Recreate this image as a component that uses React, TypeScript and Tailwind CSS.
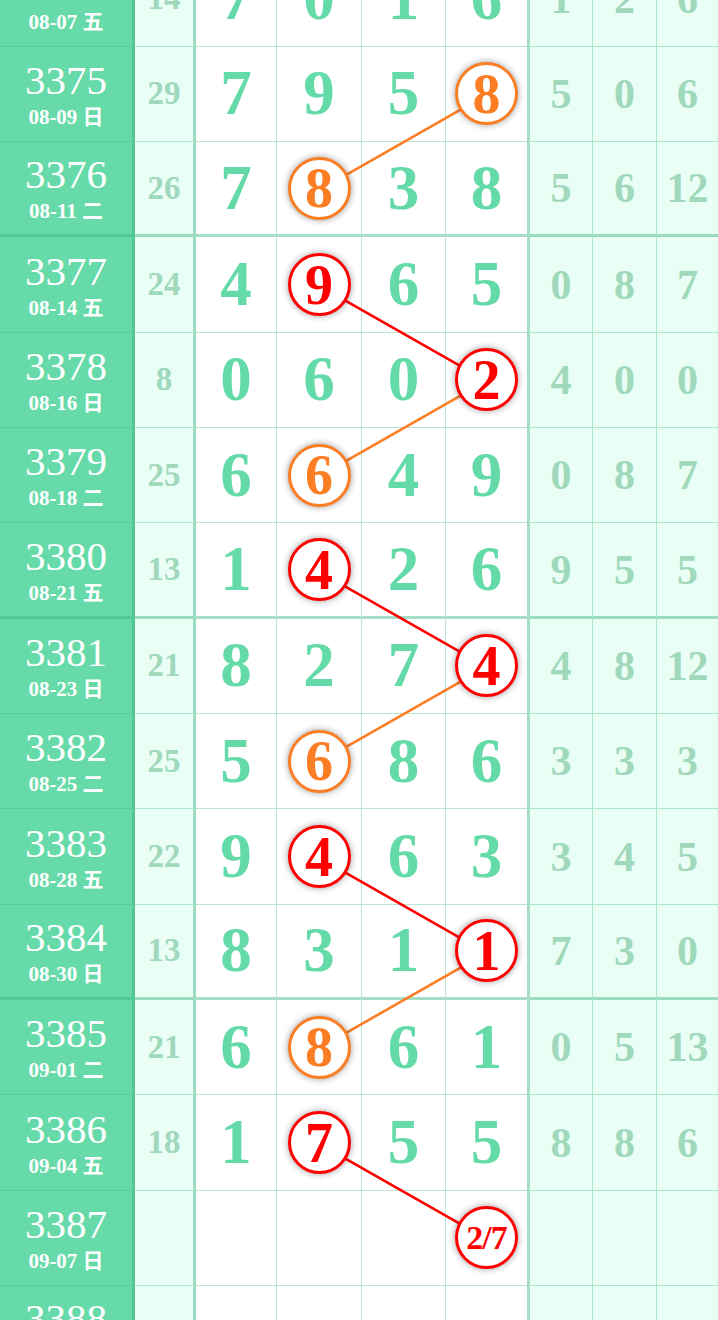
import React from 'react';

type Tone = 'red' | 'orange';
type Row = {
    period: number;
    date: string;
    sum: string;
    nums: string[];
    tail: string[];
    mark?: { col: number; tone: Tone };
};

const rows: Row[] = [
    { period: 3374, date: '08-07 五', sum: '14', nums: ['7', '0', '1', '6'], tail: ['1', '2', '6'] },
    { period: 3375, date: '08-09 日', sum: '29', nums: ['7', '9', '5', '8'], tail: ['5', '0', '6'], mark: { col: 3, tone: 'orange' } },
    { period: 3376, date: '08-11 二', sum: '26', nums: ['7', '8', '3', '8'], tail: ['5', '6', '12'], mark: { col: 1, tone: 'orange' } },
    { period: 3377, date: '08-14 五', sum: '24', nums: ['4', '9', '6', '5'], tail: ['0', '8', '7'], mark: { col: 1, tone: 'red' } },
    { period: 3378, date: '08-16 日', sum: '8', nums: ['0', '6', '0', '2'], tail: ['4', '0', '0'], mark: { col: 3, tone: 'red' } },
    { period: 3379, date: '08-18 二', sum: '25', nums: ['6', '6', '4', '9'], tail: ['0', '8', '7'], mark: { col: 1, tone: 'orange' } },
    { period: 3380, date: '08-21 五', sum: '13', nums: ['1', '4', '2', '6'], tail: ['9', '5', '5'], mark: { col: 1, tone: 'red' } },
    { period: 3381, date: '08-23 日', sum: '21', nums: ['8', '2', '7', '4'], tail: ['4', '8', '12'], mark: { col: 3, tone: 'red' } },
    { period: 3382, date: '08-25 二', sum: '25', nums: ['5', '6', '8', '6'], tail: ['3', '3', '3'], mark: { col: 1, tone: 'orange' } },
    { period: 3383, date: '08-28 五', sum: '22', nums: ['9', '4', '6', '3'], tail: ['3', '4', '5'], mark: { col: 1, tone: 'red' } },
    { period: 3384, date: '08-30 日', sum: '13', nums: ['8', '3', '1', '1'], tail: ['7', '3', '0'], mark: { col: 3, tone: 'red' } },
    { period: 3385, date: '09-01 二', sum: '21', nums: ['6', '8', '6', '1'], tail: ['0', '5', '13'], mark: { col: 1, tone: 'orange' } },
    { period: 3386, date: '09-04 五', sum: '18', nums: ['1', '7', '5', '5'], tail: ['8', '8', '6'], mark: { col: 1, tone: 'red' } },
    { period: 3387, date: '09-07 日', sum: '', nums: ['', '', '', '2/7'], tail: ['', '', ''], mark: { col: 3, tone: 'red' } },
    { period: 3388, date: '09-09 二', sum: '', nums: ['', '', '', ''], tail: ['', '', ''] },
];

// [rowA, colA, rowB, colB, tone]
const links: [number, number, number, number, Tone][] = [
    [1, 3, 2, 1, 'orange'],
    [3, 1, 4, 3, 'red'],
    [4, 3, 5, 1, 'orange'],
    [6, 1, 7, 3, 'red'],
    [7, 3, 8, 1, 'orange'],
    [9, 1, 10, 3, 'red'],
    [10, 3, 11, 1, 'orange'],
    [12, 1, 13, 3, 'red'],
];

const ROW_H = 95.33;
const colCenters = [236, 319, 403.5, 486.5];
const toneColor: Record<Tone, string> = { red: '#ff0000', orange: '#fb7d24' };

const Ball: React.FC<{ value: string; tone: Tone }> = ({ value, tone }) => (
    <div
        className={`relative z-20 flex h-[63px] w-[63px] items-center justify-center rounded-full border-[3px] bg-white shadow-[0_0_7px_rgba(0,0,0,0.4)] ${
            tone === 'red' ? 'border-[#ff0000] text-[#ff0000]' : 'border-[#fb7d24] text-[#fb7d24]'
        }`}
    >
        <span className={value.length > 1 ? 'text-[34px] leading-none tracking-[-1px]' : 'text-[56px] leading-none'}>{value}</span>
    </div>
);

const TableRow: React.FC<{ row: Row }> = ({ row }) => {
    const groupEnd = row.period % 4 === 0;
    const line = groupEnd ? 'border-b-[3px] border-b-[rgba(60,180,130,0.45)]' : 'border-b border-b-[rgba(70,190,140,0.38)]';

    return (
        <div className="grid h-[95.33px] grid-cols-[135px_61px_81px_85px_84px_84px_63px_64px_61px]">
            {/* period + date */}
            <div className={`flex flex-col items-center justify-center bg-[#67daa9] text-white border-r-[3px] border-r-[rgba(30,140,90,0.25)] ${line}`}>
                <span className="text-[41px] font-normal leading-none">{row.period}</span>
                <span className="mt-[6px] text-[21px] font-bold leading-none">{row.date}</span>
            </div>

            {/* sum */}
            <div className={`flex items-center justify-center bg-[#e9fef4] text-[33px] font-bold leading-none text-[#9fd8bb] border-r-[3px] border-r-[rgba(60,180,130,0.45)] ${line}`}>
                {row.sum}
            </div>

            {/* draw numbers */}
            {row.nums.map((n, i) => (
                <div
                    key={i}
                    className={`flex items-center justify-center bg-white text-[63px] font-bold leading-none text-[#64daa8] ${
                        i === 3 ? 'border-r-[3px] border-r-[rgba(60,180,130,0.45)]' : 'border-r border-r-[rgba(70,190,140,0.38)]'
                    } ${line}`}
                >
                    {row.mark && row.mark.col === i ? <Ball value={n} tone={row.mark.tone} /> : n}
                </div>
            ))}

            {/* tail stats */}
            {row.tail.map((t, i) => (
                <div
                    key={i}
                    className={`flex items-center justify-center bg-[#e9fef4] text-[42px] font-bold leading-none text-[#9fd8bb] ${
                        i < 2 ? 'border-r border-r-[rgba(70,190,140,0.38)]' : ''
                    } ${line}`}
                >
                    {t}
                </div>
            ))}
        </div>
    );
};

const App: React.FC = () => {
    const totalH = rows.length * ROW_H;

    return (
        <div className="h-[1320px] w-[718px] overflow-hidden bg-white font-['Liberation_Serif','Noto_Sans_CJK_SC',serif]">
            <div className="relative -mt-[48.5px]">
                {rows.map(r => (
                    <TableRow key={r.period} row={r} />
                ))}

                {/* trend lines */}
                <svg className="pointer-events-none absolute left-0 top-0 z-10" width={718} height={totalH}>
                    {links.map(([ra, ca, rb, cb, tone], i) => (
                        <line
                            key={i}
                            x1={colCenters[ca]}
                            y1={ra * ROW_H + ROW_H / 2}
                            x2={colCenters[cb]}
                            y2={rb * ROW_H + ROW_H / 2}
                            stroke={toneColor[tone]}
                            strokeWidth={2.6}
                        />
                    ))}
                </svg>
            </div>
        </div>
    );
};

export default App;
